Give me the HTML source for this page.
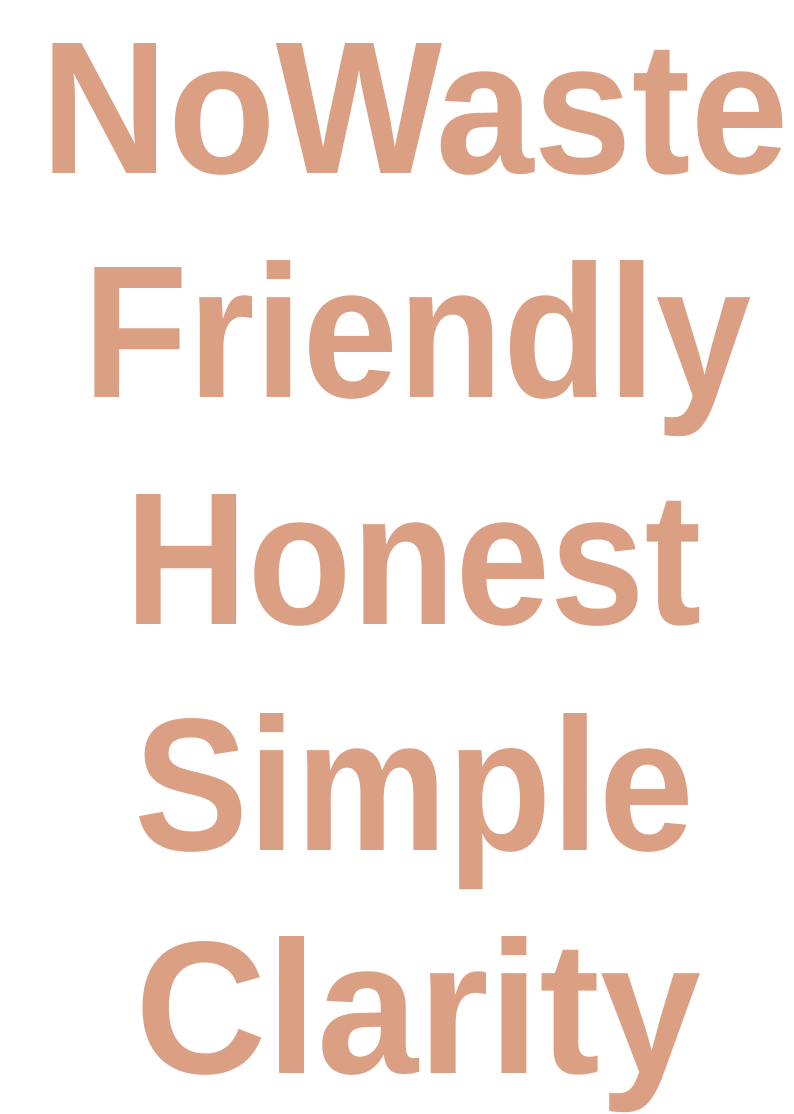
<!DOCTYPE html>
<html><head><meta charset="utf-8"><style>
html,body{margin:0;padding:0;background:#fff;}
body{width:794px;height:1111px;position:relative;overflow:hidden;}
.l{position:absolute;width:794px;text-align:center;font-family:"Liberation Sans",sans-serif;font-weight:bold;font-size:189px;line-height:189px;color:#DBA083;white-space:nowrap;transform-origin:50% 50%;}
</style></head><body>
<div class="l" style="left:14px;top:14px;transform:scaleX(.933)">NoWaste</div>
<div class="l" style="left:20px;top:238px;transform:scaleX(.909)">Friendly</div>
<div class="l" style="left:16px;top:465px;transform:scaleX(.900)">Honest</div>
<div class="l" style="left:17px;top:691px;transform:scaleX(.903)">Simple</div>
<div class="l" style="left:21px;top:914px;transform:scaleX(.962)">Clarity</div>
</body></html>
